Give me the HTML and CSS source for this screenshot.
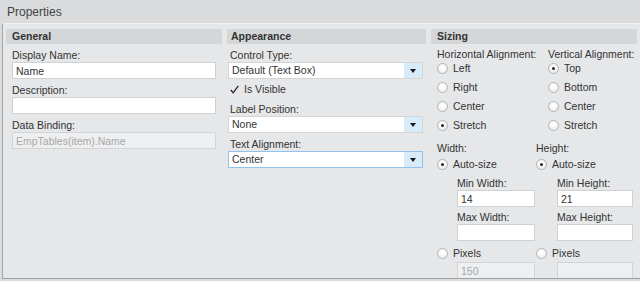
FILE: index.html
```html
<!DOCTYPE html>
<html lang="en">
  <head>
    <meta charset="UTF-8" />
    <title>Properties</title>
    <link rel="stylesheet" href="styles.css">
  </head>
  <body>
    <div class="title-bar">Properties</div>
    <div class="panel">
      <!-- General -->
      <section class="group group-general">
        <h2 class="group-header">General</h2>
        <div class="group-body">
          <div class="field-label">Display Name:</div>
          <input class="text-input" type="text" value="Name" />
          <div class="field-label">Description:</div>
          <input class="text-input" type="text" value="" />
          <div class="field-label">Data Binding:</div>
          <input class="text-input" type="text" value="EmpTables(item).Name" disabled />
        </div>
      </section>

      <!-- Appearance -->
      <section class="group group-appearance">
        <h2 class="group-header">Appearance</h2>
        <div class="group-body">
          <div class="field-label">Control Type:</div>
          <div class="combo">
            <span class="combo-value">Default (Text Box)</span>
            <span class="combo-btn"><span class="arrow"></span></span>
          </div>
          <div class="check-row">
            <svg class="check-mark" width="9" height="9" viewBox="0 0 9 9">
              <path d="M0.8 5 L3.2 7.8 L8.3 0.8" fill="none" stroke="#222" stroke-width="1.3" />
            </svg>
            <span>Is Visible</span>
          </div>
          <div class="field-label label-gap">Label Position:</div>
          <div class="combo">
            <span class="combo-value">None</span>
            <span class="combo-btn"><span class="arrow"></span></span>
          </div>
          <div class="field-label">Text Alignment:</div>
          <div class="combo focused">
            <span class="combo-value">Center</span>
            <span class="combo-btn"><span class="arrow"></span></span>
          </div>
        </div>
      </section>

      <!-- Sizing -->
      <section class="group group-sizing">
        <h2 class="group-header">Sizing</h2>
        <div class="group-body">
          <div class="align-grid">
            <div class="option-col">
              <div class="option-title">Horizontal Alignment:</div>
              <div class="radio-row"><span class="radio"></span>Left</div>
              <div class="radio-row"><span class="radio"></span>Right</div>
              <div class="radio-row"><span class="radio"></span>Center</div>
              <div class="radio-row"><span class="radio checked"></span>Stretch</div>
            </div>
            <div class="option-col">
              <div class="option-title">Vertical Alignment:</div>
              <div class="radio-row"><span class="radio checked"></span>Top</div>
              <div class="radio-row"><span class="radio"></span>Bottom</div>
              <div class="radio-row"><span class="radio"></span>Center</div>
              <div class="radio-row"><span class="radio"></span>Stretch</div>
            </div>
          </div>
          <div class="size-grid">
            <div class="size-col size-width">
              <div class="option-title">Width:</div>
              <div class="radio-row tight"><span class="radio checked"></span>Auto-size</div>
              <div class="size-sub">
                <div class="field-label">Min Width:</div>
                <input class="text-input" type="text" value="14" />
                <div class="field-label small-gap">Max Width:</div>
                <input class="text-input" type="text" value="" />
              </div>
              <div class="radio-row"><span class="radio"></span>Pixels</div>
              <div class="size-sub">
                <input class="text-input pixels-input" type="text" value="150" disabled />
              </div>
            </div>
            <div class="size-col size-height">
              <div class="option-title">Height:</div>
              <div class="radio-row tight"><span class="radio checked"></span>Auto-size</div>
              <div class="size-sub">
                <div class="field-label">Min Height:</div>
                <input class="text-input" type="text" value="21" />
                <div class="field-label small-gap">Max Height:</div>
                <input class="text-input" type="text" value="" />
              </div>
              <div class="radio-row"><span class="radio"></span>Pixels</div>
              <div class="size-sub">
                <input class="text-input pixels-input" type="text" value="" disabled />
              </div>
            </div>
          </div>
        </div>
      </section>
    </div>
  </body>
</html>
```

FILE: styles.css
```css
* {
  box-sizing: border-box;
}
body {
  margin: 0;
  background: #dadbdd;
  font-family: "Liberation Sans", Arial, sans-serif;
  font-size: 10.5px;
  color: #333;
}
.title-bar {
  height: 23px;
  padding: 2px 0 0 7px;
  line-height: 21px;
  font-size: 12px;
  color: #444;
}
.panel {
  display: flex;
  gap: 5px;
  height: 256px;
  margin-left: 2px;
  padding: 5px 0 0 3px;
  background: #e6e7e9;
  border-top: 1px solid #f3f3f4;
  border-left: 1px solid #a4a5a7;
  border-bottom: 1px solid #9fa0a2;
  overflow: hidden;
}
.group {
  flex: none;
}
.group-general {
  width: 216px;
}
.group-appearance {
  width: 199px;
}
.group-sizing {
  width: 206px;
}
.group-header {
  margin: 0;
  height: 15px;
  padding-left: 6px;
  line-height: 14px;
  font-size: 10.5px;
  font-weight: bold;
  color: #333;
  background: #d5d6d8;
}
.group-appearance .group-header {
  padding-left: 4px;
}
.group-general .group-body {
  padding: 4px 6px 0 6px;
}
.group-appearance .group-body {
  padding: 4px 3px 0 1px;
}
.group-sizing .group-body {
  padding: 3px 4px 0 6px;
}
.field-label {
  line-height: 14px;
  margin-top: 4px;
  white-space: nowrap;
}
.group-appearance .field-label {
  padding-left: 2px;
}
.field-label:first-child {
  margin-top: 0;
}
.field-label.label-gap {
  margin-top: 5px;
}
.field-label.small-gap {
  margin-top: 3px;
}
.text-input {
  display: block;
  width: 100%;
  height: 17px;
  margin: 0;
  padding: 0 3px;
  font: inherit;
  color: #333;
  background: #fff;
  border: 1px solid #cfd0d2;
  outline: none;
}
.text-input:disabled {
  background: #eeeff0;
  border-color: #d3d4d6;
  color: #a8a8a8;
}
/* Dropdowns */
.combo {
  display: flex;
  height: 17px;
  background: #fff;
  border: 1px solid #d4d5d7;
}
.combo.focused {
  border-color: #94c1e8;
}
.combo-value {
  flex: 1;
  padding-left: 3px;
  line-height: 15px;
}
.combo-btn {
  display: flex;
  align-items: center;
  justify-content: center;
  width: 18px;
  background: #d8ebf8;
}
.arrow {
  width: 0;
  height: 0;
  border-left: 3px solid transparent;
  border-right: 3px solid transparent;
  border-top: 4px solid #1a1a1a;
}
.check-row {
  display: flex;
  align-items: center;
  gap: 5px;
  height: 16px;
  margin-top: 2px;
  padding-left: 2px;
}
/* Sizing */
.align-grid {
  display: grid;
  grid-template-columns: 111px 1fr;
}
.option-title {
  line-height: 14px;
  white-space: nowrap;
}
.radio-row {
  display: flex;
  align-items: center;
  gap: 5px;
  height: 14px;
  margin-top: 5px;
  white-space: nowrap;
}
.option-title + .radio-row {
  margin-top: 0;
}
.radio-row.tight {
  margin-top: 2px;
}
.radio {
  position: relative;
  flex: none;
  width: 11px;
  height: 11px;
  border-radius: 50%;
  border: 1px solid #b3b4b6;
  background: radial-gradient(circle at 50% 40%, #ffffff 20%, #e2e3e5 100%);
}
.radio.checked::after {
  content: "";
  position: absolute;
  left: 3px;
  top: 3px;
  width: 3px;
  height: 3px;
  border-radius: 50%;
  background: #222;
}
.size-grid {
  display: grid;
  grid-template-columns: 99px 1fr;
  margin-top: 9px;
}
.size-width .size-sub {
  padding: 0 1px 0 20px;
}
.size-height .size-sub {
  padding: 0 0 0 21px;
}
.size-sub .field-label:first-child {
  margin-top: 5px;
}
.pixels-input {
  margin-top: 2px;
}
```
